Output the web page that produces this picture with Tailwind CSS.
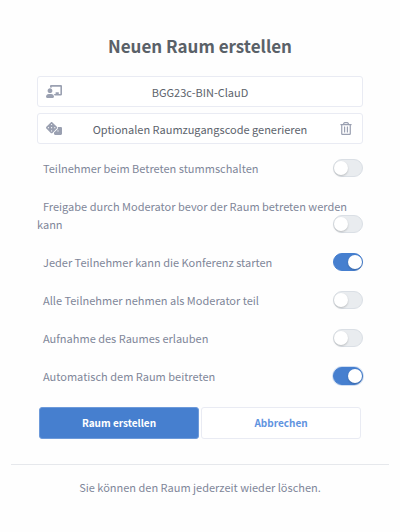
<!DOCTYPE html>
<html lang="de">
<head>
<meta charset="utf-8">
<meta name="viewport" content="width=device-width, initial-scale=1">
<title>Neuen Raum erstellen</title>
<script src="https://cdn.jsdelivr.net/npm/@tailwindcss/browser@4"></script>
</head>
<body class="bg-[#fefefe] font-['Noto_Sans_CJK_SC',sans-serif] text-[11px] leading-[18px] text-[#7f8699]">
<main class="px-[11px] pt-8">
  <form class="px-[26px]">
    <h1 class="text-center text-[17px] leading-7 font-bold text-[#5a6168]">Neuen Raum erstellen</h1>

    <div class="mt-4 flex h-[31px] items-center rounded-[3px] border border-[#e9ebf3] bg-white px-2 focus-within:border-[#467fcf]">
      <svg class="h-[13px] w-4 shrink-0 text-[#9aa0b1]" viewBox="0 0 640 512" fill="currentColor" aria-hidden="true"><path d="M208 352c-2.400 0-4.800.4-7.100 1.100-13 4.200-26.600 6.900-40.900 6.900s-27.900-2.700-40.900-6.900c-2.300-.7-4.700-1.100-7.100-1.100C49.900 352-.3 402.500 0 464.600.1 490.900 21.700 512 48 512h224c26.300 0 47.900-21.100 48-47.400.3-62.100-49.900-112.600-112-112.600zm-48-32c53 0 96-43 96-96s-43-96-96-96-96 43-96 96 43 96 96 96zM592 0H208c-26.500 0-48 22.200-48 49.400V96c23.400 0 45.100 6.800 64 17.800V64h352v288h-64v-64H384v64h-76.200c19.100 16.700 33.100 38.700 39.700 64H592c26.500 0 48-22.200 48-49.400V49.400C640 22.200 618.500 0 592 0z"/></svg>
      <input class="w-full min-w-0 flex-1 bg-transparent pr-4 text-center text-[#5c636c] outline-none" type="text" aria-label="Raumname" value="BGG23c-BIN-ClauD">
    </div>

    <div class="mt-[6px] flex h-[31px] items-center rounded-[3px] border border-[#e9ebf3] bg-white px-2">
      <button type="button" class="flex flex-1 items-center text-[#5c636c]">
        <svg class="h-[13px] w-4 shrink-0 text-[#9aa0b1]" viewBox="0 0 640 512" fill="currentColor" aria-hidden="true"><path d="M592 192H473.300c12.700 29.600 7.100 65.200-17 89.200L320 417.600V464c0 26.500 21.500 48 48 48h224c26.500 0 48-21.500 48-48V240c0-26.500-21.500-48-48-48zM480 376c-13.300 0-24-10.700-24-24s10.700-24 24-24 24 10.700 24 24-10.700 24-24 24zm-46.400-186.700L258.700 14.400c-19.200-19.200-50.200-19.200-69.400 0L14.400 189.300c-19.200 19.200-19.200 50.200 0 69.400l174.900 174.900c19.200 19.200 50.200 19.200 69.400 0l174.900-174.900c19.200-19.200 19.200-50.200 0-69.400zM96 248c-13.300 0-24-10.700-24-24s10.700-24 24-24 24 10.700 24 24-10.700 24-24 24zm128 128c-13.300 0-24-10.700-24-24s10.700-24 24-24 24 10.700 24 24-10.700 24-24 24zm0-128c-13.300 0-24-10.700-24-24s10.700-24 24-24 24 10.700 24 24-10.700 24-24 24zm0-128c-13.300 0-24-10.700-24-24s10.700-24 24-24 24 10.700 24 24-10.700 24-24 24zm128 128c-13.300 0-24-10.700-24-24s10.700-24 24-24 24 10.700 24 24-10.700 24-24 24z"/></svg>
        <span class="flex-1 text-center">Optionalen Raumzugangscode generieren</span>
      </button>
      <button type="button" class="flex w-4 shrink-0 justify-center text-[#9aa0b1]" aria-label="Zugangscode löschen">
        <svg class="h-[13px] w-3" viewBox="0 0 448 512" fill="currentColor" aria-hidden="true"><path d="M268 416h24a12 12 0 0 0 12-12V188a12 12 0 0 0-12-12h-24a12 12 0 0 0-12 12v216a12 12 0 0 0 12 12zM432 80h-82.400l-34-56.700A48 48 0 0 0 274.400 0H173.600a48 48 0 0 0-41.200 23.300L98.400 80H16A16 16 0 0 0 0 96v16a16 16 0 0 0 16 16h16v336a48 48 0 0 0 48 48h288a48 48 0 0 0 48-48V128h16a16 16 0 0 0 16-16V96a16 16 0 0 0-16-16zM171.800 50.900A6 6 0 0 1 177 48h94a6 6 0 0 1 5.200 2.900L293.600 80H154.400zM368 464H80V128h288zM156 416h24a12 12 0 0 0 12-12V188a12 12 0 0 0-12-12h-24a12 12 0 0 0-12 12v216a12 12 0 0 0 12 12z"/></svg>
      </button>
    </div>

    <div class="mt-[15px] flex flex-col gap-5">
      <label class="flow-root indent-[6px]">Teilnehmer beim Betreten stummschalten
        <input type="checkbox" role="switch" class="float-right flex h-[18px] w-[30px] appearance-none items-center rounded-full border border-[#dadfe5] bg-[#e9ecef] before:size-[14px] before:rounded-full before:bg-white before:shadow-[0_1px_2px_rgba(0,0,0,0.2)] checked:justify-end checked:border-[#467fcf] checked:bg-[#467fcf]">
      </label>
      <label class="flow-root indent-[6px]">Freigabe durch Moderator bevor der Raum betreten werden kann
        <input type="checkbox" role="switch" class="float-right flex h-[18px] w-[30px] appearance-none items-center rounded-full border border-[#dadfe5] bg-[#e9ecef] before:size-[14px] before:rounded-full before:bg-white before:shadow-[0_1px_2px_rgba(0,0,0,0.2)] checked:justify-end checked:border-[#467fcf] checked:bg-[#467fcf]">
      </label>
      <label class="flow-root indent-[6px]">Jeder Teilnehmer kann die Konferenz starten
        <input type="checkbox" role="switch" checked class="float-right flex h-[18px] w-[30px] appearance-none items-center rounded-full border border-[#dadfe5] bg-[#e9ecef] before:size-[14px] before:rounded-full before:bg-white before:shadow-[0_1px_2px_rgba(0,0,0,0.2)] checked:justify-end checked:border-[#467fcf] checked:bg-[#467fcf]">
      </label>
      <label class="flow-root indent-[6px]">Alle Teilnehmer nehmen als Moderator teil
        <input type="checkbox" role="switch" class="float-right flex h-[18px] w-[30px] appearance-none items-center rounded-full border border-[#dadfe5] bg-[#e9ecef] before:size-[14px] before:rounded-full before:bg-white before:shadow-[0_1px_2px_rgba(0,0,0,0.2)] checked:justify-end checked:border-[#467fcf] checked:bg-[#467fcf]">
      </label>
      <label class="flow-root indent-[6px]">Aufnahme des Raumes erlauben
        <input type="checkbox" role="switch" class="float-right flex h-[18px] w-[30px] appearance-none items-center rounded-full border border-[#dadfe5] bg-[#e9ecef] before:size-[14px] before:rounded-full before:bg-white before:shadow-[0_1px_2px_rgba(0,0,0,0.2)] checked:justify-end checked:border-[#467fcf] checked:bg-[#467fcf]">
      </label>
      <label class="indent-[6px]">Automatisch dem Raum beitreten
        <input type="checkbox" role="switch" checked class="float-right flex h-[18px] w-[30px] appearance-none items-center rounded-full border border-[#dadfe5] bg-[#e9ecef] shadow-[0_0_0_1px_rgba(70,127,207,0.25)] before:size-[14px] before:rounded-full before:bg-white before:shadow-[0_1px_2px_rgba(0,0,0,0.2)] checked:justify-end checked:border-[#467fcf] checked:bg-[#467fcf]">
      </label>
    </div>

    <div class="mt-[22px] grid grid-cols-2 gap-[2px] px-[2px] text-[10px] font-bold">
      <button type="submit" class="h-8 rounded-[3px] border border-[#6d9ada] bg-[#467fcf] text-white">Raum erstellen</button>
      <button type="button" class="h-8 rounded-[3px] border border-[#e9ebf3] bg-white text-[#5f94df]">Abbrechen</button>
    </div>
  </form>
  <hr class="mt-[25px] border-[#e6e8ec]">
  <p class="mt-[13px] text-center">Sie können den Raum jederzeit wieder löschen.</p>
</main>
</body>
</html>
